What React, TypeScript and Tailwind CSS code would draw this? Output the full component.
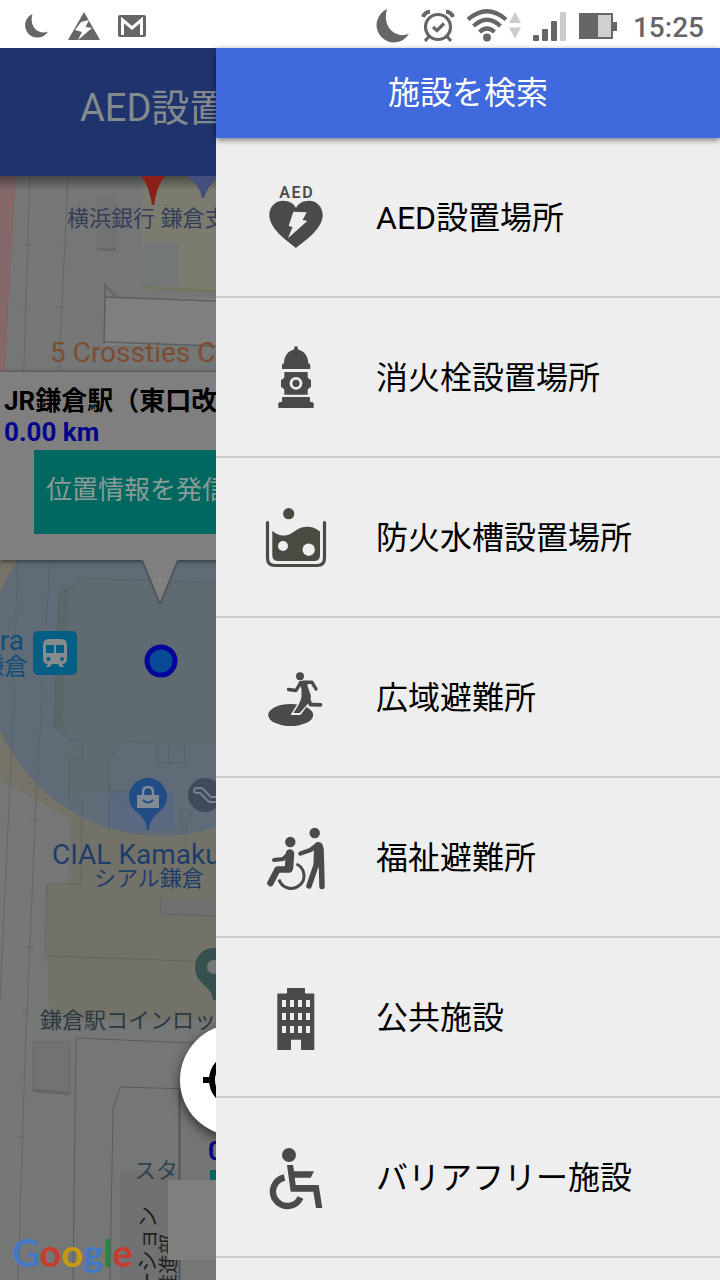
import type { ReactNode } from "react";

const INK = "#4a4a4a";
const PAPER = "#eeeeee";

function Icon({ children }: { children: ReactNode }) {
  return (
    <svg viewBox="0 0 64 64" className="size-16 shrink-0 overflow-visible" fill={INK} aria-hidden="true">
      {children}
    </svg>
  );
}

function AedIcon() {
  return (
    <Icon>
      <text x="32" y="12.500" fontSize="16" fontWeight="600" textAnchor="middle" fontFamily="Roboto, sans-serif">
        A{"\u200a"}E{"\u200a"}D
      </text>
      <path d="M32 63C27 58.500 5.300 45 5.300 30C5.300 22 11 15.700 19 15.700C25 15.700 30 18.500 32 23C34 18.500 39 15.700 45 15.700C53 15.700 58.700 22 58.700 30C58.700 45 37 58.500 32 63Z" />
      <path d="M29.300 26.700L42.700 27.300L38.600 35L43.300 36L24 53.300L28.500 42L24.700 41Z" fill={PAPER} />
    </Icon>
  );
}

function HydrantIcon() {
  return (
    <Icon>
      <path d="M30 4.500C30 2 31 1 32 1S34 2 34 4.500C40 6 44.300 11 44.300 18.500H45.500L46.300 20V24H18V20L18.800 18.500H20C20 11 24 6 30 4.500Z" />
      <path d="M20.300 27H43.700V33H45V34.500H47V42.500H45V44H43.700V49.700H20.300V44H19V42.500H17V34.500H19V33H20.300Z" />
      <circle cx="32" cy="38.300" r="5" fill="none" stroke={PAPER} strokeWidth="2.800" />
      <path d="M18 53Q18 52 19 52H45Q46 52 46 53V57H48.500L49.700 58.500V63H14.300V58.500L15.500 57H18Z" />
    </Icon>
  );
}

function TankIcon() {
  return (
    <Icon>
      <g fill="#4a4a42">
        <circle cx="24.700" cy="8.700" r="5.600" />
        <path d="M3.500 17.500V53Q3.500 60.500 11 60.500H53Q60.500 60.500 60.500 53V17.500" fill="none" stroke="#4a4a42" strokeWidth="3.200" strokeLinecap="round" />
        <path d="M8.300 25.700C13 30 20 32.500 27 28.500C33 25 36 21.700 43 21.700C49 21.700 53 24 56 26.500V50Q56 56 50 56H14.300Q8.300 56 8.300 50Z" />
        <circle cx="19" cy="41" r="5" fill={PAPER} />
        <circle cx="44.700" cy="44.700" r="6.200" fill={PAPER} />
      </g>
    </Icon>
  );
}

function EvacuationIcon() {
  return (
    <Icon>
      <ellipse cx="26.700" cy="50" rx="22.500" ry="11" />
      <path d="M36 36C34 41 31 44 28.300 49H36L45 37" fill={INK} stroke={PAPER} strokeWidth="2" />
      <path d="M34.500 17Q36 15.500 39 15.800L44 16L43.500 21L47 31Q46 37 42 41L35.500 48H29.500C32 44 35.500 40 37.500 32L37.500 24Z" />
      <g fill="none" stroke={INK} strokeLinecap="round" strokeLinejoin="round">
        <path d="M36.500 18L32 25.500L24.500 24.500M40 17.300H48L52 24" strokeWidth="3.400" />
        <path d="M44 33L46.500 39.500L56.500 39.800" strokeWidth="3.800" />
      </g>
      <circle cx="36" cy="11.300" r="4" />
    </Icon>
  );
}

function WelfareIcon() {
  return (
    <Icon>
      <circle cx="26.300" cy="17" r="5.200" />
      <circle cx="50.700" cy="8" r="5.200" />
      <g fill="none" stroke={INK} strokeLinecap="round" strokeLinejoin="round">
        <path d="M32.500 39A12.800 12.800 0 1 1 15 54.500" strokeWidth="3" strokeLinecap="butt" />
        <path d="M26 27.500L19 34L10 35" strokeWidth="4" />
        <path d="M26 28.500L25 43" strokeWidth="8.500" />
        <path d="M25 44.500H13.500L6.500 58" strokeWidth="6.500" />
        <path d="M53 20L46.500 25L36.500 28.500" strokeWidth="4.500" />
        <path d="M54.500 21.500L54 38" strokeWidth="9" />
        <path d="M52.500 39L45 61" strokeWidth="5.500" />
        <path d="M57 24L57.500 40L58 61.500" strokeWidth="5.500" />
      </g>
    </Icon>
  );
}

function BuildingIcon() {
  return (
    <Icon>
      <path d="M23 3H41V8.500H50.300V65H37V54.700H27V65H13.300V8.500H23Z" />
      <g fill={PAPER}>
        {[15, 28, 41].map((y) => [18, 26, 34, 42].map((x) => <rect key={`${x}-${y}`} x={x} y={y} width="4" height="7" />))}
      </g>
    </Icon>
  );
}

function WheelchairIcon() {
  return (
    <Icon>
      <circle cx="25" cy="10" r="7" />
      <path d="M23 20H29L30 26.300H50L46.700 32.700H30.700L31.700 40H54.700L58.300 63H52L49.300 46.700H26.700Z" />
      <path d="M20.500 32.500A14.400 14.400 0 1 0 36.500 52.500" fill="none" stroke={INK} strokeWidth="6.400" />
    </Icon>
  );
}

const facilities = [
  { label: "AED設置場所", icon: <AedIcon /> },
  { label: "消火栓設置場所", icon: <HydrantIcon /> },
  { label: "防火水槽設置場所", icon: <TankIcon /> },
  { label: "広域避難所", icon: <EvacuationIcon /> },
  { label: "福祉避難所", icon: <WelfareIcon /> },
  { label: "公共施設", icon: <BuildingIcon /> },
  { label: "バリアフリー施設", icon: <WheelchairIcon /> },
];

function Moon({ className }: { className: string }) {
  return (
    <svg viewBox="0 0 24 24" className={className} fill="#666666" aria-hidden="true">
      <path d="M8.500 0A12.300 12.300 0 1 0 24 17.500C15 21.500 4.500 13 8.500 0Z" />
    </svg>
  );
}

function StatusBar() {
  return (
    <div className="flex h-12 shrink-0 items-center justify-between bg-white pt-1 pr-4 pl-6 text-[#666666]">
      <div className="flex items-center gap-5">
        <Moon className="size-6" />
        <svg viewBox="0 0 32 28" className="h-7 w-8" fill="#666666" aria-hidden="true">
          <path d="M16 0L32 28H0Z" />
          <path d="M13 10L21 8L17.500 15L24 16L10 28L14 20L7 18Z" fill="#fff" />
        </svg>
        <svg viewBox="0 0 28 24" className="ml-[-2px] h-6 w-7" aria-hidden="true">
          <rect y="1" width="28" height="22" rx="2" fill="#666666" />
          <path d="M4.500 21V6L14 14L23.500 6V21" fill="none" stroke="#fff" strokeWidth="3" />
        </svg>
      </div>
      <div className="flex items-center gap-3">
        <Moon className="size-[34px]" />
        <svg viewBox="0 0 34 34" className="size-[34px]" fill="none" stroke="#666666" strokeWidth="3.200" aria-hidden="true">
          <circle cx="17" cy="18" r="12.500" />
          <path d="M12 18L16 21.500L23 14.500" />
          <path d="M2 8Q4 3 9 2.500M32 8Q30 3 25 2.500" strokeWidth="4" />
          <path d="M8 27.500L4 32M26 27.500L30 32" />
        </svg>
        <svg viewBox="0 0 54 34" className="h-[34px] w-[54px]" fill="none" stroke="#666666" strokeWidth="4.200" aria-hidden="true">
          <path d="M1 10.500Q20 -6 39 10.500" />
          <path d="M6.500 17Q20 4.500 33.500 17" />
          <path d="M12.500 23Q20 16 27.500 23" />
          <circle cx="20" cy="28.500" r="3.900" fill="#666666" stroke="none" />
          <path d="M48 3L54 14H42ZM42 18.500H54L48 29.500Z" fill="#cccccc" stroke="none" />
        </svg>
        <svg viewBox="0 0 34 32" className="h-8 w-[34px]" fill="#666666" aria-hidden="true">
          <rect y="25" width="6" height="6" rx="1" />
          <rect x="9" y="19" width="6" height="12" rx="1" />
          <rect x="18" y="11" width="6" height="20" rx="1" />
          <rect x="27" y="2" width="6" height="29" rx="1" fill="#cccccc" />
        </svg>
        <svg viewBox="0 0 38 28" className="h-7 w-[38px]" aria-hidden="true">
          <path d="M0 1H34V10H38V19H34V27H0Z" fill="#666666" />
          <path d="M19 3H32V25H19Z" fill="#d0d0d0" />
        </svg>
        <time className="ml-1 pt-1 text-[28px] leading-8 font-medium">15:25</time>
      </div>
    </div>
  );
}

function MapTiles() {
  return (
    <svg viewBox="0 176 216 1104" preserveAspectRatio="xMinYMin slice" className="absolute inset-0 h-full w-full" aria-hidden="true">
      <defs>
        <linearGradient id="top-shadow" x1="0" y1="0" x2="0" y2="1">
          <stop offset="0" stopColor="#000" stopOpacity=".4" />
          <stop offset="1" stopColor="#000" stopOpacity="0" />
        </linearGradient>
      </defs>
      <rect y="176" width="216" height="1104" fill="#757676" />
      <path d="M0 176H15L4 372H0Z" fill="#83696a" />
      <path d="M15 176L4 372" stroke="#955d5c" fill="none" />
      <path d="M143 176H216V293L141 287Z" fill="#7b7b70" />
      <path d="M143 243H178V287H141Z" fill="#737777" />
      <path d="M141 286L216 290V293L141 288Z" fill="#74745f" />
      <path d="M97 198H117V251H97Z" fill="#717373" />
      <path d="M97 248H116V251H97Z" fill="#686a6a" />
      <path d="M106 298H216V345H104Z" fill="#7f7f7f" />
      <path d="M216 301L105 297L104 344M105 297V285L116 297M104 342L216 346" fill="none" stroke="#5c5f61" strokeWidth="1.500" />
      <path d="M0 560H216V836H100L0 780Z" fill="#757368" />
      <path d="M70 820H216V1020H50L47 956V885H68Z" fill="#737269" />
      <path d="M161 900H216V916L160 913Z" fill="#707071" />
      <circle cx="161" cy="661" r="175" fill="#5f6c78" />
      <path d="M59 593L85 578L216 584V744H123L110 760L109 792H70V740L54 727Z" fill="#606b71" />
      <path d="M59 593L68 588L63 730L54 727Z" fill="#5b6669" />
      <path d="M109 791H174V828Q140 836 107 826Z" fill="#5a6981" />
      <path d="M30 176L12 740L0 1000M68 176L50 560L36 800L25 1060L18 1280" fill="none" stroke="#5f6163" strokeOpacity=".8" />
      <path d="M25 245H31M60 245H68M20 307H27M56 307H64M37 693H44M34 756H41M31 820H39M26 947H33M23 1011H29M20 1074H26M18 1137H24" stroke="#626467" fill="none" />
      <path d="M216 583L85 578L59 593L54 727L72 740H82V759H70L69 800H82L81 884H47L45 956L216 962M109 833V760L123 741L157 743V762L185 763V744H169V763M157 775L123 803L109 791H140M181 806V830M186 842V820L216 785M161 898V914L216 916" fill="none" stroke="#505a5c" strokeOpacity=".55" />
      <path d="M33 1042H70V1095L33 1090Z" fill="#727272" stroke="#686868" />
      <path d="M33 1089L69 1092V1095L33 1092Z" fill="#656565" />
      <path d="M73 1280L76 1038L216 1044M110 1280L113 1110L120 1087L190 1089" fill="none" stroke="#5c5c5c" />
      <path d="M120 1170H180V1280H120Z" fill="#717171" />
      <path d="M180 1090H216V1180H180Z" fill="#747474" />
      <path d="M179.500 1090V1180M179.500 1260V1280" stroke="#555" strokeWidth="2" fill="none" />
      <path d="M0 176H216V190H0Z" fill="url(#top-shadow)" />
      <path d="M141 176H165Q157 185 154 205H152Q149 185 141 176Z" fill="#8b1f1a" />
      <path d="M187 176H219Q208 185 204 198H202Q200 185 187 176Z" fill="#444e7c" />
      <circle cx="161" cy="661" r="14" fill="#084a96" stroke="#04049a" strokeWidth="5" />
      <rect x="33" y="631" width="44" height="44" rx="5" fill="#055f85" />
      <path d="M43 645Q43 639 49 639H61Q67 639 67 645V659Q67 664 62 664L64 667H60L58 664H52L50 667H46L48 664Q43 664 43 659Z" fill="#868b8d" />
      <path d="M46 645H54V653H46ZM56 645H64V653H56Z" fill="#055f85" />
      <circle cx="48.500" cy="659" r="2" fill="#055f85" />
      <circle cx="62" cy="659" r="2" fill="#055f85" />
      <path d="M129 797A19 19 0 1 1 167 797C167 813 150 812 149 830H147C146 812 129 813 129 797Z" fill="#224c86" />
      <path d="M137 795H159V808H137Z" fill="#828b94" />
      <path d="M143 795V792Q143 787 148 787T153 792V795" fill="none" stroke="#828b94" strokeWidth="2.500" />
      <path d="M143 800Q148 805 153 800" fill="none" stroke="#224c86" strokeWidth="2" />
      <circle cx="205" cy="795" r="17" fill="#3f4b5b" />
      <path d="M218 797H211L203 789Q202 788 200 788H197Q194 788 194 790.500T197 793H200L208 801Q209 802 211 802H218" fill="none" stroke="#79828b" strokeWidth="1.800" />
      <path d="M195 967A19 19 0 0 1 216 948V1000H213C212 985 195 985 195 967Z" fill="#36504f" />
      <circle cx="214" cy="967" r="7" fill="#74787a" />
    </svg>
  );
}

function InfoWindow() {
  return (
    <article className="absolute top-[196px] left-0 w-80 bg-[#7f7f7f] pb-[26px] text-[26px] shadow-[0_1px_5px_rgba(0,0,0,0.6)]">
      <h2 className="pt-[13px] pl-1 leading-8 font-bold text-black">JR鎌倉駅（東口改札）</h2>
      <p className="pl-1 leading-[30px] font-bold text-[#04048c]">0.00 km</p>
      <button type="button" className="mt-[3px] ml-[34px] block h-[84px] bg-[#00685f] px-3 pb-1 text-[#8a9a98]">
        位置情報を発信する
      </button>
      <svg viewBox="0 0 40 48" className="absolute top-full left-[140px] h-12 w-10" aria-hidden="true">
        <path d="M1 0L20 46L39 0Z" fill="#4c5358" />
        <path d="M3 0L20 42L37 0Z" fill="#7f7f7f" />
      </svg>
    </article>
  );
}

function GoogleLogo() {
  return (
    <a href="#google" aria-label="Google" className="absolute bottom-[6px] left-3 font-[Lato] text-[38px] leading-[44px] font-bold whitespace-nowrap">
      <span className="text-[#4378c4]">G</span>
      <span className="text-[#c63c31]">o</span>
      <span className="text-[#c89a14]">o</span>
      <span className="text-[#4378c4]">g</span>
      <span className="text-[#2b8540]">l</span>
      <span className="text-[#c63c31]">e</span>
    </a>
  );
}

function MapPage() {
  return (
    <section className="flex w-[30%] shrink-0 flex-col overflow-hidden whitespace-nowrap">
      <header className="flex h-32 shrink-0 items-center bg-[#1f336d] pb-2 pl-20">
        <h1 className="text-[38px] leading-[48px] text-[#858b8d]">AED設置場所</h1>
      </header>
      <div className="relative flex-1 overflow-hidden">
        <MapTiles />
        <span className="absolute top-[27px] left-[67px] text-[22px] leading-8 text-[#353e59]">横浜銀行 鎌倉支店</span>
        <span className="absolute top-[161px] left-[50px] text-[28px] leading-8 text-[#7c4d30]">5 Crossties Coffee</span>
        <InfoWindow />
        <div className="absolute top-[452px] left-0 w-7 text-right text-[#124c78]">
          <p className="float-right mr-1 text-[28px] leading-[26px]">Kamakura</p>
          <p className="float-right text-[24px] leading-[26px]">鎌倉</p>
        </div>
        <span className="absolute top-[663px] left-[52px] text-[28px] leading-8 text-[#1f3d69]">CIAL Kamakura</span>
        <span className="absolute top-[687px] left-[94px] text-[22px] leading-8 text-[#1f3d69]">シアル鎌倉</span>
        <span className="absolute top-[829px] left-10 text-[22px] leading-8 text-[#2b3940]">鎌倉駅コインロッカー</span>
        <span className="absolute top-[979px] left-[134px] text-[22px] leading-8 text-[#2d4353]">スタ</span>
        <span className="absolute top-[1030px] left-[136px] w-6 rotate-180 text-[22px] leading-6 text-[#222222] [writing-mode:sideways-rl]">ステーション</span>
        <span className="absolute top-[1058px] left-[157px] w-6 rotate-180 text-[20px] leading-6 text-[#222222] [writing-mode:sideways-rl]">開発推進部</span>
        <div className="absolute top-[1004px] left-[168px] h-20 w-40 bg-[#7f7f7f]" />
        <div className="absolute top-[959px] left-[208px] text-[26px] leading-8 font-bold text-[#04048c]">0.00 km</div>
        <div className="absolute top-[994px] left-[210px] h-[10px] w-20 bg-[#00685f]" />
        <GoogleLogo />
        <button
          type="button"
          aria-label="現在地"
          className="absolute top-[848px] left-[180px] size-28 rounded-full bg-white shadow-[0_4px_12px_rgba(0,0,0,0.6)]"
        >
          <svg viewBox="0 0 112 112" fill="none" stroke="#000" strokeWidth="6" aria-hidden="true">
            <circle cx="56" cy="56" r="24" />
            <path d="M23 56H32M80 56H89M56 23V32M56 80V89" />
          </svg>
        </button>
      </div>
    </section>
  );
}

function FacilityDrawer() {
  return (
    <aside className="flex flex-1 flex-col bg-[#eeeeee]">
      <header className="relative flex h-[90px] shrink-0 items-center justify-center bg-[#3f69dd] shadow-[0_2px_6px_rgba(0,0,0,0.5)]">
        <h2 className="text-[32px] leading-10 text-white">施設を検索</h2>
      </header>
      <nav aria-label="施設を検索">
        <ul>
          {facilities.map((facility) => (
            <li key={facility.label} className="border-b-2 border-[#cfcfcf]">
              <a href="#map" className="flex h-[158px] items-center gap-12 px-12 text-[32px] leading-10 text-black">
                {facility.icon}
                <span className="pt-[2px]">{facility.label}</span>
              </a>
            </li>
          ))}
        </ul>
      </nav>
    </aside>
  );
}

export default function App() {
  return (
    <div className="flex min-h-screen flex-col bg-[#eeeeee] font-[Roboto,'Noto_Sans_CJK_JP',sans-serif]" lang="ja">
      <StatusBar />
      <main className="flex flex-1">
        <MapPage />
        <FacilityDrawer />
      </main>
    </div>
  );
}
